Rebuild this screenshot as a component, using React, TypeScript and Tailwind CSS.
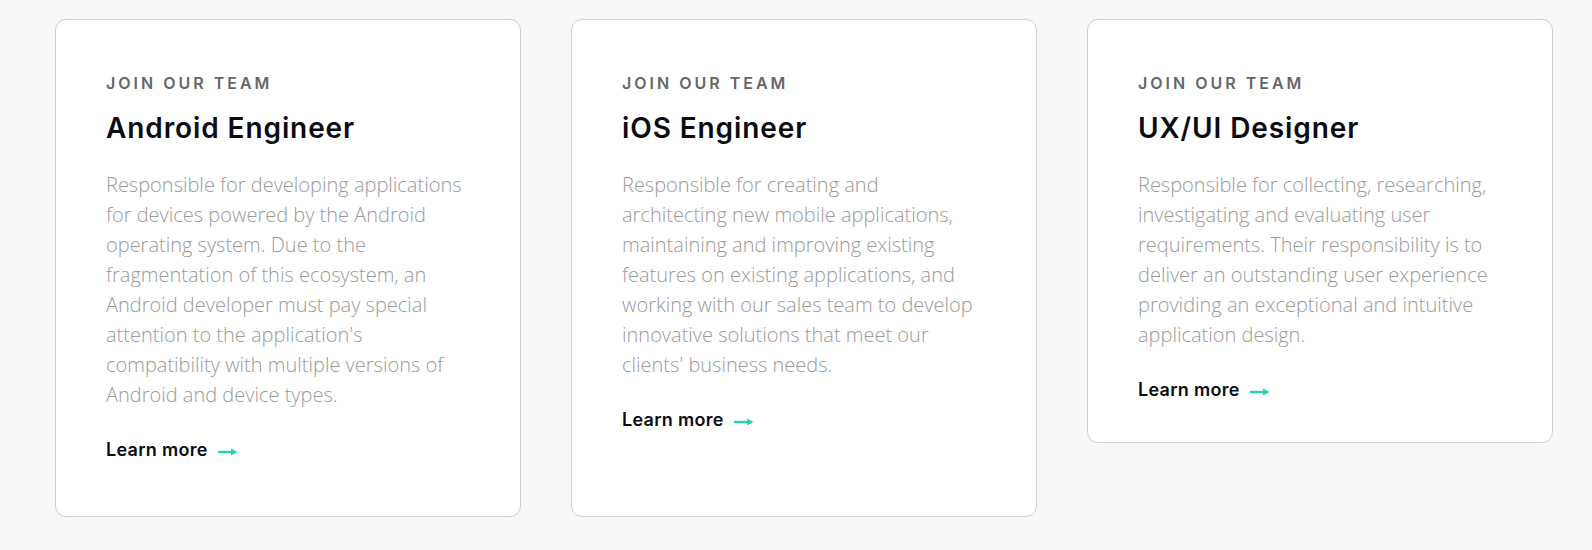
import React from "react";

const cards = [
  {
    title: "Android Engineer",
    text: "Responsible for developing applications for devices powered by the Android operating system. Due to the fragmentation of this ecosystem, an Android developer must pay special attention to the application's compatibility with multiple versions of Android and device types.",
    h: "h-[498px]",
  },
  {
    title: "iOS Engineer",
    text: "Responsible for creating and architecting new mobile applications, maintaining and improving existing features on existing applications, and working with our sales team to develop innovative solutions that meet our clients' business needs.",
    h: "h-[498px]",
  },
  {
    title: "UX/UI Designer",
    text: "Responsible for collecting, researching, investigating and evaluating user requirements. Their responsibility is to deliver an outstanding user experience providing an exceptional and intuitive application design.",
    h: "h-[424px]",
  },
];

function Arrow() {
  return (
    <svg width="20" height="8" viewBox="0 0 20 8" className="mt-[3px]">
      <path d="M0 4 H14" stroke="#1fd6b0" strokeWidth="2.4" />
      <path d="M13 0.6 L19.5 4 L13 7.4 Z" fill="#1fd6b0" />
    </svg>
  );
}

export default function App() {
  return (
    <div className="min-h-[550px] w-full bg-[#f7f7f9] pl-[55px] pt-[19px]">
      <div className="flex items-start gap-[50px]">
        {cards.map((c) => (
          <div
            key={c.title}
            className={`w-[466px] ${c.h} shrink-0 rounded-[11px] border border-[#d2d2d4] bg-white pl-[50px] pr-[40px] pt-[51px]`}
          >
            <div
              className="text-[16px] leading-[24px] font-semibold tracking-[3px] text-[#666666]"
              style={{ fontFamily: "Inter, 'Noto Sans', sans-serif" }}
            >
              JOIN OUR TEAM
            </div>
            <div
              className="mt-[15px] text-[28px] leading-[36px] font-semibold tracking-[0.9px] text-[#0b0b14]"
              style={{ fontFamily: "Inter, 'Noto Sans', sans-serif" }}
            >
              {c.title}
            </div>
            <p
              className="mt-[24px] w-[362px] text-[20px] leading-[30px] font-light text-[#9a9a9a]"
              style={{ fontFamily: "'Open Sans', sans-serif" }}
            >
              {c.text}
            </p>
            <div className="mt-[26px] flex items-center gap-[10px]">
              <span
                className="text-[18px] leading-[28px] font-semibold tracking-[0.3px] text-[#0b0b14]"
                style={{ fontFamily: "Inter, 'Noto Sans', sans-serif" }}
              >
                Learn more
              </span>
              <Arrow />
            </div>
          </div>
        ))}
      </div>
    </div>
  );
}
